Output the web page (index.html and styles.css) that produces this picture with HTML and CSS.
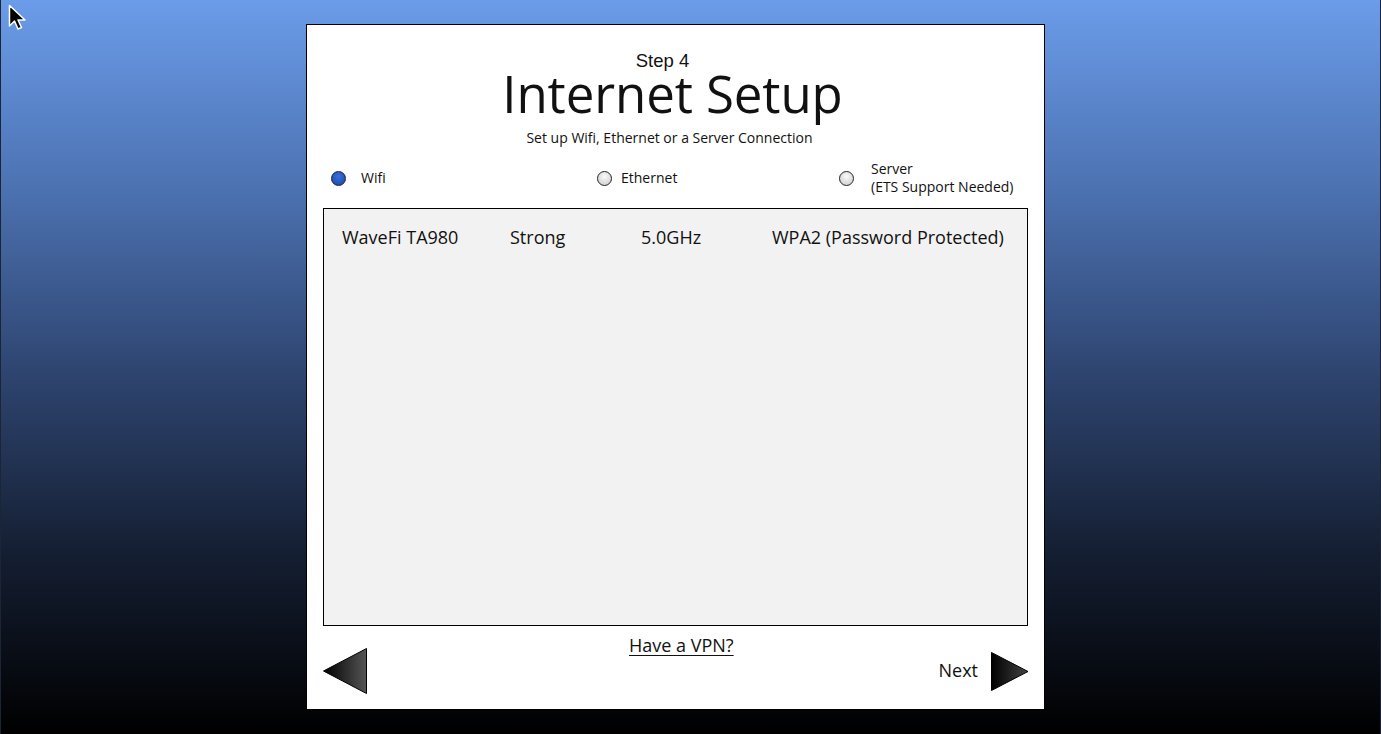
FILE: index.html
```html
<!DOCTYPE html>
<html>
<head>
<meta charset="utf-8">
<link rel="stylesheet" href="styles.css">
</head>
<body>
<div class="screen">
  <svg class="cursor" width="20" height="28" viewBox="0 0 20 28"><path d="M1.5 1.5 L1.5 22 L6.5 17 L10 25 L13.5 23.5 L10 16 L17 16 Z" fill="#000" stroke="#fff" stroke-width="1.5" stroke-linejoin="round"/></svg>
  <div class="panel">
    <div class="header">
      <div class="step">Step 4</div>
      <div class="title">Internet Setup</div>
      <div class="subtitle">Set up Wifi, Ethernet or a Server Connection</div>
    </div>
    <div class="options">
      <div class="opt opt-wifi"><span class="radio on"></span><span class="lbl">Wifi</span></div>
      <div class="opt opt-eth"><span class="radio"></span><span class="lbl">Ethernet</span></div>
      <div class="opt opt-srv"><span class="radio"></span><span class="lbl">Server<br>(ETS Support Needed)</span></div>
    </div>
    <div class="list">
      <div class="row">
        <span class="c1">WaveFi TA980</span>
        <span class="c2">Strong</span>
        <span class="c3">5.0GHz</span>
        <span class="c4">WPA2 (Password Protected)</span>
      </div>
    </div>
    <div class="footer">
      <svg class="arrow" width="44" height="46" viewBox="0 0 44 46">
        <defs><linearGradient id="gl" x1="0" x2="1" y1="0" y2="0"><stop offset="0" stop-color="#000"/><stop offset="1" stop-color="#555"/></linearGradient></defs>
        <polygon points="0.5,23 43.5,0.5 43.5,45.5" fill="url(#gl)" stroke="#000" stroke-width="1"/>
      </svg>
      <a class="vpn">Have a VPN?</a>
      <div class="next"><span>Next</span>
        <svg class="arrow" width="38" height="40" viewBox="0 0 38 40">
          <defs><linearGradient id="gr" x1="0" x2="1" y1="0" y2="0"><stop offset="0" stop-color="#000"/><stop offset="1" stop-color="#444"/></linearGradient></defs>
          <polygon points="0.5,0.5 37,19.5 0.5,38.5" fill="url(#gr)" stroke="#000" stroke-width="1"/>
        </svg>
      </div>
    </div>
  </div>
</div>
</body>
</html>
```
FILE: styles.css
```css
* { box-sizing: border-box; }
html, body { margin: 0; padding: 0; }
body { width: 1381px; height: 734px; overflow: hidden; }
.screen {
  position: relative;
  width: 1381px; height: 734px;
  background: linear-gradient(to bottom, #6b9ce9 0%, #4d73b3 25%, #2f4672 50%, #151f33 75%, #000 100%);
  border-left: 1px solid #1b2535;
  border-right: 1px solid #1b2535;
  padding-top: 24px;
  padding-left: 305px;
  font-family: "Open Sans", "Noto Sans", sans-serif;
  color: #111;
}
.cursor { position: absolute; left: 7px; top: 4px; }
.panel {
  width: 739px; height: 686px;
  background: #fff;
  border: 1px solid #000;
  display: flex; flex-direction: column;
  padding: 0 16px 0 16px;
}
.header { display: flex; flex-direction: column; align-items: center; padding-top: 27px; }
.step { font-family: "Liberation Sans", Arial, sans-serif; font-size: 18.5px; line-height: 17px; margin-left: -26px; }
.title { font-size: 51px; line-height: 48px; margin-top: 0; letter-spacing: -0.1px; margin-left: -6px; }
.subtitle { font-size: 14px; line-height: 20px; margin-top: 11px; margin-left: -12px; }
.options { display: flex; height: 60px; padding-top: 16px; }
.opt { display: flex; align-items: flex-start; font-size: 14px; line-height: 18px; }
.radio {
  width: 15px; height: 15px; border-radius: 50%;
  border: 1px solid #222;
  background: radial-gradient(circle at 50% 35%, #fafafa, #c8c8c8);
  margin-top: 7px; flex: none;
}
.radio.on { background: radial-gradient(circle at 50% 35%, #3a6fd8, #1a45a8); border-color: #0d1f4a; }
.opt-wifi { margin-left: 8px; width: 266px; }
.opt-wifi .lbl { margin-left: 15px; margin-top: 5px; }
.opt-eth { width: 242px; }
.opt-eth .lbl { margin-left: 9px; margin-top: 5px; }
.opt-srv .lbl { margin-left: 17px; margin-top: -4px; }
.list {
  width: 705px; height: 418px;
  background: #f2f2f2;
  border: 1px solid #000;
  padding: 15px 0 0 18px;
}
.row { display: flex; font-size: 18px; line-height: 26px; }
.c1 { width: 168px; }
.c2 { width: 131px; }
.c3 { width: 131px; }
.footer { position: relative; height: 59px; display: flex; align-items: flex-start; }
.footer > .arrow { margin-top: 22px; }
.vpn { font-size: 18px; line-height: 24px; text-decoration: underline; color: #111; margin-left: 262px; margin-top: 7px; text-underline-offset: 3px; }
.next { display: flex; align-items: center; margin-left: auto; margin-right: -1px; margin-top: 26px; font-size: 18px; }
.next span { margin-right: 13px; margin-top: -4px; }
```
